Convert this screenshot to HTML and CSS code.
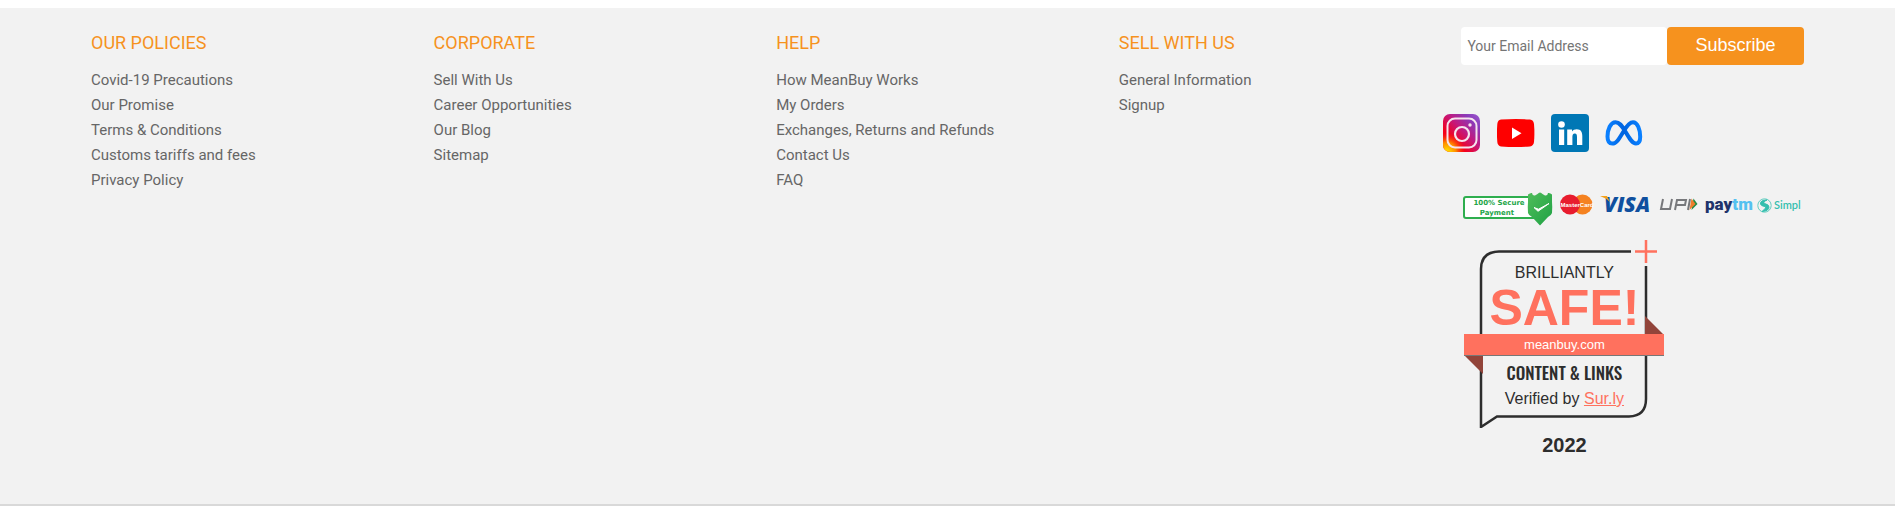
FILE: index.html
```html
<!DOCTYPE html>
<html lang="en">
<head>
<meta charset="utf-8">
<title>MeanBuy</title>
<link rel="stylesheet" href="styles.css">
</head>
<body>
<footer class="footer">
  <nav class="links" aria-labelledby="h-policies">
    <h2 class="title" id="h-policies">OUR POLICIES</h2>
    <ul class="list">
      <li><a href="#">Covid-19 Precautions</a></li>
      <li><a href="#">Our Promise</a></li>
      <li><a href="#">Terms &amp; Conditions</a></li>
      <li><a href="#">Customs tariffs and fees</a></li>
      <li><a href="#">Privacy Policy</a></li>
    </ul>
  </nav>
  <nav class="links" aria-labelledby="h-corporate">
    <h2 class="title" id="h-corporate">CORPORATE</h2>
    <ul class="list">
      <li><a href="#">Sell With Us</a></li>
      <li><a href="#">Career Opportunities</a></li>
      <li><a href="#">Our Blog</a></li>
      <li><a href="#">Sitemap</a></li>
    </ul>
  </nav>
  <nav class="links" aria-labelledby="h-help">
    <h2 class="title" id="h-help">HELP</h2>
    <ul class="list">
      <li><a href="#">How MeanBuy Works</a></li>
      <li><a href="#">My Orders</a></li>
      <li><a href="#">Exchanges, Returns and Refunds</a></li>
      <li><a href="#">Contact Us</a></li>
      <li><a href="#">FAQ</a></li>
    </ul>
  </nav>
  <nav class="links" aria-labelledby="h-sell">
    <h2 class="title" id="h-sell">SELL WITH US</h2>
    <ul class="list">
      <li><a href="#">General Information</a></li>
      <li><a href="#">Signup</a></li>
    </ul>
  </nav>

  <section class="connect">
    <form class="subscribe">
      <input class="email" type="email" placeholder="Your Email Address" aria-label="Your Email Address">
      <button class="send" type="submit">Subscribe</button>
    </form>

    <div class="social">
      <a href="#" aria-label="Instagram">
        <svg width="38" height="38" viewBox="0 0 38 38">
          <defs>
            <linearGradient id="ig-base" x1="0" y1="1" x2="1" y2="0">
              <stop offset="0.3" stop-color="#f5001a"/>
              <stop offset="0.55" stop-color="#c4187c"/>
              <stop offset="0.8" stop-color="#8a3ab9"/>
              <stop offset="1" stop-color="#9a5bd0"/>
            </linearGradient>
            <radialGradient id="ig-glow" cx="0.1" cy="1" r="0.5">
              <stop offset="0.1" stop-color="#ffd800"/>
              <stop offset="0.5" stop-color="#ff8a00"/>
              <stop offset="1" stop-color="#ff3000" stop-opacity="0"/>
            </radialGradient>
          </defs>
          <rect width="37" height="38" rx="7" fill="url(#ig-base)"/>
          <rect width="37" height="38" rx="7" fill="url(#ig-glow)"/>
          <rect x="4.5" y="4.5" width="29" height="29" rx="7.500" fill="none" stroke="#f6e4ee" stroke-width="2"/>
          <circle cx="19" cy="20" r="7" fill="none" stroke="#f6e4ee" stroke-width="2.200"/>
          <circle cx="27" cy="11" r="1.700" fill="#f6e4ee"/>
        </svg>
      </a>
      <a href="#" aria-label="YouTube">
        <svg width="38" height="38" viewBox="0 0 38 38">
          <path d="M4 5.600Q19 4.400 33 5.600Q36.500 6 37 10Q37.800 19 37 28Q36.500 32 33 32.400Q19 33.600 4 32.400Q0.700 32 0.300 28Q-0.400 19 0.300 10Q0.700 6 4 5.600Z" fill="#fe0000"/>
          <path d="M15 13.500V25L24.500 19.200Z" fill="#fff"/>
        </svg>
      </a>
      <a href="#" aria-label="LinkedIn">
        <svg width="38" height="38" viewBox="0 0 38 38">
          <rect width="38" height="38" rx="4" fill="#0077b5"/>
          <circle cx="10.500" cy="10.500" r="3.300" fill="#fff"/>
          <path d="M8 15.500H13.200V31H8ZM16.200 15.500H21V17.600C22 16 23.700 15.200 25.700 15.200C30 15.200 31.300 18 31.300 22.300V31H26V23.400C26 21.300 25.700 19.600 23.800 19.600C21.900 19.600 21.400 21.200 21.400 23.300V31H16.200Z" fill="#fff"/>
        </svg>
      </a>
      <a href="#" aria-label="Meta">
        <svg width="38" height="38" viewBox="0 0 38 38">
          <defs>
            <linearGradient id="meta-blue" x1="0" y1="0" x2="1" y2="0">
              <stop offset="0" stop-color="#0a80ff"/>
              <stop offset="0.5" stop-color="#0064e0"/>
              <stop offset="1" stop-color="#0a80ff"/>
            </linearGradient>
          </defs>
          <path d="M10.500 8.200C5.500 8.200 2.500 15.500 2.500 22.500C2.500 27 4 29.600 7.300 29.600C11.500 29.600 14 25 18.700 17.200C22 11.500 24.500 8.200 28 8.200C32.500 8.200 35.200 15.500 35.200 22.800C35.200 27.300 34 29.600 31 29.600C27.500 29.600 25 25.500 20.500 17.800C16.500 11 14.300 8.200 10.500 8.200Z" fill="none" stroke="url(#meta-blue)" stroke-width="4"/>
        </svg>
      </a>
    </div>

    <div class="payments">
      <svg width="98" height="36" viewBox="0 0 98 36" role="img" aria-label="100% Secure Payment">
        <defs>
          <linearGradient id="shield" x1="0" y1="0" x2="1" y2="1">
            <stop offset="0" stop-color="#4fbd5a"/>
            <stop offset="1" stop-color="#1fa144"/>
          </linearGradient>
        </defs>
        <rect x="3" y="5" width="72" height="21" rx="2" fill="#fff" stroke="#2eae4e" stroke-width="2"/>
        <path d="M67 2.500Q69.500 0.500 71 1Q71.500 4 74 3.500L76.500 2Q79 -1 81.500 2L84 3.500Q86.500 4 87 1Q89 0.500 91 2.500V10Q91.500 15 91 21Q90.500 23 87 25L79 33.500L71 25Q67.500 23 67 21Q66.500 15 67 10Z" fill="url(#shield)"/>
        <path d="M73 15.500L77 19.300L88 11.500L77.500 17.200Z" fill="#fff" stroke="#fff"/>
        <text class="secure" x="38" y="13" text-anchor="middle">100% Secure</text>
        <text class="secure" x="36" y="23" text-anchor="middle">Payment</text>
      </svg>
      <svg width="41" height="36" viewBox="0 0 41 36" role="img" aria-label="MasterCard">
        <circle cx="22.500" cy="12.500" r="10" fill="#f58220"/>
        <circle cx="10" cy="12.500" r="10" fill="#e81c2e"/>
        <text class="mastercard" x="17" y="15" text-anchor="middle">MasterCard</text>
      </svg>
      <svg width="58" height="36" viewBox="0 0 58 36" role="img" aria-label="VISA">
        <text class="visa" x="3" y="20">VISA</text>
        <path d="M-1 4H6L9 10Q5 6 -1 4Z" fill="#f4a21d"/>
      </svg>
      <svg width="46" height="36" viewBox="0 0 46 36" role="img" aria-label="UPI">
        <path d="M4 7L2 17H11L13 7M16 18L18 8H27L26 13H17.500M31 7L29 18" fill="none" stroke="#77787b" stroke-width="2"/>
        <path d="M34.500 6.500L38.500 12L32.500 18Z" fill="#1f8a44"/>
        <path d="M32.500 6.500L36.500 12L30.500 18Z" fill="#ee7d2b"/>
      </svg>
      <svg width="52" height="36" viewBox="0 0 52 36" role="img" aria-label="Paytm">
        <text class="paytm" x="0" y="18">pay<tspan class="paytm-tm">tm</tspan></text>
      </svg>
      <svg width="47" height="36" viewBox="0 0 47 36" role="img" aria-label="Simpl">
        <circle cx="7.500" cy="13.500" r="6.700" fill="none" stroke="#62cec1"/>
        <path d="M10 8Q3 8 3.500 12Q4 14 8 14.500Q10 15.500 5 19.500Q12 19 12 15Q12 12.500 7.500 11.500Q5.500 10 10 8Z" fill="#35bfae" stroke="#35bfae"/>
        <text class="simpl" x="17" y="17">Simpl</text>
      </svg>
    </div>

    <div class="badge">
      <svg class="frame" width="200" height="188" viewBox="0 0 200 188" aria-hidden="true">
        <path d="M167 11.500H35Q17 12 17 29V187L33 176.500H165Q182 176 182 159V26" fill="none" stroke="#2d2d2d" stroke-width="2.500"/>
        <path d="M171 11.500H193M182 0V23" fill="none" stroke="#ff715e" stroke-width="2.500"/>
        <path d="M181 76L200 95H181ZM0 115H19V134Z" fill="#92443a"/>
      </svg>
      <span class="brilliantly">BRILLIANTLY</span>
      <strong class="safe">SAFE!</strong>
      <span class="ribbon">meanbuy.com</span>
      <span class="content">CONTENT &amp; LINKS</span>
      <span class="verified">Verified by <a href="#">Sur.ly</a></span>
      <strong class="year">2022</strong>
    </div>
  </section>
</footer>
</body>
</html>
```
FILE: styles.css
```css
* {
  box-sizing: border-box;
}

body {
  margin: 8px 0 0;
  background: #fff;
  font-family: Roboto, "Liberation Sans", sans-serif;
}

.footer {
  display: grid;
  grid-template-columns: repeat(5, minmax(0, 1fr));
  padding: 19px 91px 47px;
  background: #f2f2f2;
  border-bottom: 2px solid #d9d9d9;
}

.title {
  margin: 4px 0 13px;
  color: #f6921e;
  font-size: 18px;
  font-weight: 400;
  line-height: 24px;
}

.list {
  margin: 0;
  padding: 0;
  list-style: none;
  font-size: 15px;
  line-height: 25px;
}

.list a {
  color: #666;
  text-decoration: none;
}

.subscribe {
  display: grid;
  grid-template-columns: 3fr 2fr;
  height: 38px;
}

.email,
.send {
  min-width: 0;
  border: 0;
  border-radius: 4px;
}

.email {
  padding: 0 6px;
  background: #fff;
  font-family: inherit;
  font-size: 14px;
}

.email::placeholder {
  color: #757575;
}

.send {
  padding: 0 0 2px;
  background: #f6921e;
  color: #fff;
  font-family: "Liberation Sans", Arial, sans-serif;
  font-size: 18px;
}

.social {
  display: flex;
  gap: 16px;
  margin: 49px 0 0 -18px;
}

.social a,
.social svg {
  display: block;
}

.payments {
  display: flex;
  justify-content: space-between;
  margin-top: 40px;
}

.payments svg {
  overflow: visible;
}

.secure {
  fill: #23a548;
  font: 900 7px "DejaVu Sans", sans-serif;
}

.mastercard {
  fill: #fff;
  font: 700 6px "Liberation Sans", sans-serif;
}

.visa {
  fill: #0f4f9e;
  font: italic 900 21px "Open Sans", sans-serif;
}

.paytm {
  fill: #20336b;
  font: 900 17px Roboto, sans-serif;
}

.paytm-tm {
  fill: #54c1f0;
}

.simpl {
  fill: #35bfae;
  font: 600 11px Lato, sans-serif;
}

.badge {
  position: relative;
  display: flex;
  flex-direction: column;
  align-items: center;
  width: 200px;
  margin: 12px 0 0 3px;
  padding-top: 23px;
  color: #2d2d2d;
  font-family: "Liberation Sans", Arial, sans-serif;
}

.frame {
  position: absolute;
  top: 0;
  left: 0;
}

.brilliantly {
  font-size: 16px;
  line-height: 20px;
}

.safe {
  color: #ff715e;
  font-size: 50px;
  line-height: 51px;
}

.ribbon {
  position: relative;
  width: 100%;
  border-bottom: 1px solid #777;
  background: #ff715e;
  color: #fff;
  font-size: 13px;
  line-height: 21px;
  text-align: center;
}

.content {
  margin-top: 5px;
  font-family: Oswald, "Roboto Condensed", "Open Sans Condensed", Roboto, sans-serif;
  font-size: 17px;
  font-weight: 500;
  line-height: 24px;
}

.verified {
  font-size: 16px;
  line-height: 28px;
}

.verified a {
  color: #ff715e;
}

.year {
  margin-top: 20px;
  font-size: 20px;
  line-height: 24px;
}
```
